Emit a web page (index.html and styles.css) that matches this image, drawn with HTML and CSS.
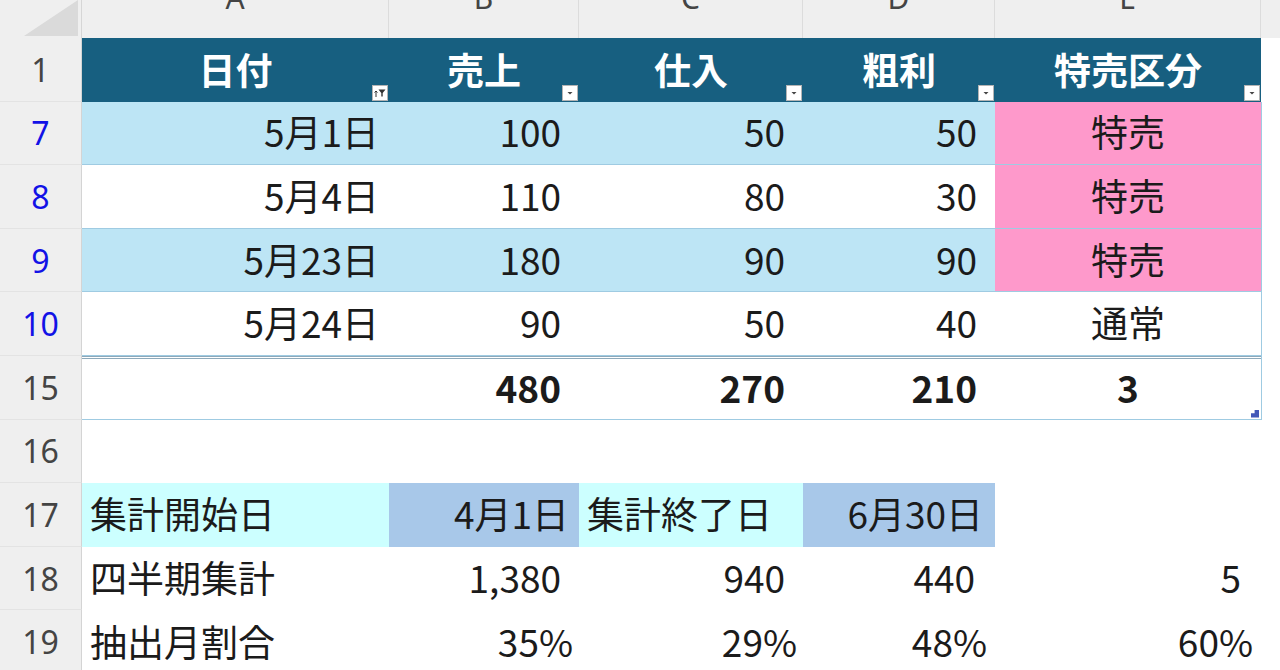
FILE: index.html
```html
<!DOCTYPE html>
<html lang="ja">
<head>
<meta charset="utf-8">
<link rel="stylesheet" href="styles.css">
</head>
<body>
<div class="sheet">
  <div class="row colhead">
    <div class="corner"><svg class="corner-tri" width="54" height="36" viewBox="0 0 54 36"><polygon points="54,0 54,36 0,36" fill="#dadada"/></svg></div>
    <div class="ch"><span>A</span></div>
    <div class="ch"><span>B</span></div>
    <div class="ch"><span>C</span></div>
    <div class="ch"><span>D</span></div>
    <div class="ch"><span>E</span></div>
    <div class="ch last"></div>
  </div>

  <div class="row r">
    <div class="rh">1</div>
    <div class="c th">日付<span class="fbtn"><svg width="14" height="14" viewBox="0 0 14 14"><path d="M3 11V5M1.5 6.5L3 5l1.5 1.5" stroke="#333" stroke-width="1" fill="none"/><path d="M5.5 3.5h7l-2.8 3.5v3.5h-1.4V7z" fill="#333"/></svg></span></div>
    <div class="c th">売上<span class="fbtn"><svg width="14" height="14" viewBox="0 0 14 14"><path d="M4.5 6h5L7 8.5z" fill="#444"/></svg></span></div>
    <div class="c th">仕入<span class="fbtn"><svg width="14" height="14" viewBox="0 0 14 14"><path d="M4.5 6h5L7 8.5z" fill="#444"/></svg></span></div>
    <div class="c th">粗利<span class="fbtn"><svg width="14" height="14" viewBox="0 0 14 14"><path d="M4.5 6h5L7 8.5z" fill="#444"/></svg></span></div>
    <div class="c th">特売区分<span class="fbtn"><svg width="14" height="14" viewBox="0 0 14 14"><path d="M4.5 6h5L7 8.5z" fill="#444"/></svg></span></div>
    <div class="c"></div>
  </div>

  <div class="row r band">
    <div class="rh blue">7</div>
    <div class="c tb date">5月1日</div>
    <div class="c tb num">100</div>
    <div class="c tb num">50</div>
    <div class="c tb num">50</div>
    <div class="c tb ctr pink">特売</div>
    <div class="c edge"></div>
  </div>

  <div class="row r">
    <div class="rh blue">8</div>
    <div class="c tb date">5月4日</div>
    <div class="c tb num">110</div>
    <div class="c tb num">80</div>
    <div class="c tb num">30</div>
    <div class="c tb ctr pink">特売</div>
    <div class="c edge"></div>
  </div>

  <div class="row r band">
    <div class="rh blue">9</div>
    <div class="c tb date">5月23日</div>
    <div class="c tb num">180</div>
    <div class="c tb num">90</div>
    <div class="c tb num">90</div>
    <div class="c tb ctr pink">特売</div>
    <div class="c edge"></div>
  </div>

  <div class="row r">
    <div class="rh blue">10</div>
    <div class="c tb date">5月24日</div>
    <div class="c tb num">90</div>
    <div class="c tb num">50</div>
    <div class="c tb num">40</div>
    <div class="c tb ctr">通常</div>
    <div class="c edge"></div>
  </div>

  <div class="row r">
    <div class="rh">15</div>
    <div class="c tot"></div>
    <div class="c tot num bold">480</div>
    <div class="c tot num bold">270</div>
    <div class="c tot num bold">210</div>
    <div class="c tot ctr bold">3<span class="handle"></span></div>
    <div class="c edge"></div>
  </div>

  <div class="row r">
    <div class="rh">16</div>
    <div class="c"></div><div class="c"></div><div class="c"></div><div class="c"></div><div class="c"></div><div class="c"></div>
  </div>

  <div class="row r">
    <div class="rh">17</div>
    <div class="c label cyan">集計開始日</div>
    <div class="c date sky">4月1日</div>
    <div class="c label cyan">集計終了日</div>
    <div class="c date sky d2">6月30日</div>
    <div class="c"></div>
    <div class="c"></div>
  </div>

  <div class="row r">
    <div class="rh">18</div>
    <div class="c label">四半期集計</div>
    <div class="c num">1,380</div>
    <div class="c num">940</div>
    <div class="c num n2">440</div>
    <div class="c num n2">5</div>
    <div class="c"></div>
  </div>

  <div class="row r">
    <div class="rh">19</div>
    <div class="c label">抽出月割合</div>
    <div class="c pct">35%</div>
    <div class="c pct">29%</div>
    <div class="c pct p2">48%</div>
    <div class="c pct p2">60%</div>
    <div class="c"></div>
  </div>
</div>
</body>
</html>
```
FILE: styles.css
```css
* { box-sizing: border-box; }
html, body { margin: 0; padding: 0; }
body {
  width: 1280px;
  height: 670px;
  overflow: hidden;
  background: #ffffff;
  font-family: "Noto Sans CJK JP", "Noto Sans", sans-serif;
  color: #1b1b1b;
}
.sheet { display: flex; flex-direction: column; }
.row {
  display: grid;
  grid-template-columns: 82px 307px 190px 224px 192px 266px 19px;
}
.row.r { height: 63.6px; }
.colhead { height: 38px; background: #efefef; }
.corner {
  background: #efefef;
  border-right: 1px solid #d6d6d6;
  display: flex;
  align-items: flex-end;
  justify-content: flex-end;
  padding: 0 3px 2px 0;
}
.ch {
  border-right: 1px solid #dcdcdc;
  display: flex;
  justify-content: center;
  overflow: hidden;
  font-family: "Noto Sans", sans-serif;
  font-size: 30px;
  color: #444;
}
.ch span { margin-top: -22px; line-height: 40px; height: 40px; display: block; }
.ch.last { border-right: none; }

.rh {
  background: #efefef;
  border-right: 1px solid #d4d4d4;
  border-bottom: 1px solid #e3e3e3;
  display: flex;
  align-items: center;
  justify-content: center;
  font-family: "Noto Sans", sans-serif;
  font-size: 32px;
  color: #444;
}
.rh.blue { color: #1212e6; }

.c {
  display: flex;
  align-items: center;
  font-size: 37px;
  white-space: nowrap;
  position: relative;
  padding-bottom: 3px;
}
.th {
  background: #175f80;
  color: #ffffff;
  font-weight: bold;
  justify-content: center;
  font-size: 37px;
  padding-bottom: 1px;
}
.fbtn {
  position: absolute;
  right: 1px;
  bottom: 1px;
  width: 16px;
  height: 16px;
  background: #ffffff;
  border: 1px solid #b4b4b4;
  display: flex;
  align-items: center;
  justify-content: center;
}
.band .c.tb { background: #bde5f5; }
.c.pink, .band .c.pink { background: #fe99cb; }
.tb { border-bottom: 1px solid #9fcbe2; }
.edge { border-left: 1px solid #9fcbe2; }
.tot {
  border-top: 3px double #8da9ba;
  border-bottom: 1px solid #9fcbe2;
}
.handle {
  position: absolute;
  right: 2px;
  bottom: 1px;
  width: 8px;
  height: 8px;
  background: #4358b8;
  clip-path: polygon(100% 0, 100% 100%, 0 100%, 0 45%, 45% 45%, 45% 0);
}
.num { justify-content: flex-end; padding-right: 18px; }
.num.n2 { padding-right: 20px; }
.date { justify-content: flex-end; padding-right: 10px; }
.date.d2 { padding-right: 12px; }
.pct { justify-content: flex-end; padding-right: 6px; }
.pct.p2 { padding-right: 8px; }
.ctr { justify-content: center; }
.label { padding-left: 8px; }
.bold { font-weight: bold; }
.cyan { background: #ccffff; }
.sky { background: #a8c8e9; }
```
